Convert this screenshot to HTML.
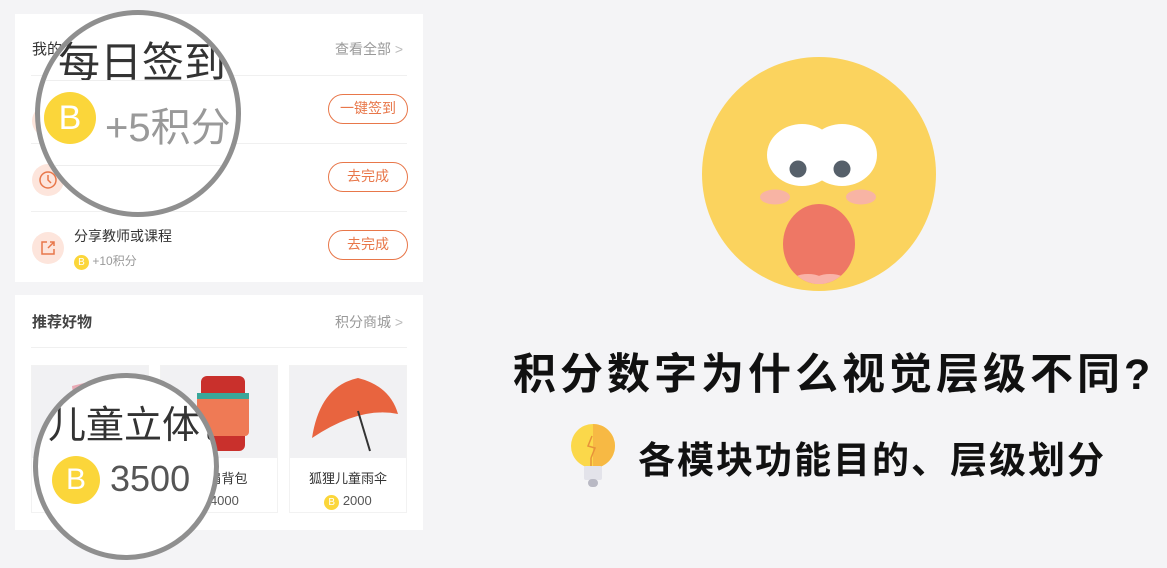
<!DOCTYPE html>
<html><head><meta charset="utf-8"><style>
*{margin:0;padding:0;box-sizing:border-box}
body{width:1167px;height:568px;background:#f4f4f6;position:relative;overflow:hidden;font-family:"Liberation Sans","Noto Sans CJK SC",sans-serif}
.a{position:absolute}
.card{position:absolute;background:#fff;left:15px;width:408px}
.t{color:#333;font-size:15px}
.g{color:#999;font-size:14px}
.btn{position:absolute;left:313px;width:80px;height:30px;border:1.5px solid #e8774a;border-radius:15px;color:#e8774a;font-size:14px;text-align:center;line-height:27px}
.line{position:absolute;left:16px;right:16px;height:1px;background:#f0f0f0}
.ic{position:absolute;left:17px;width:32px;height:32px;border-radius:50%;background:#fde5dc}
.coin{display:inline-block;border-radius:50%;background:#fbd63a;color:#fff;text-align:center}
.prod{position:absolute;top:70px;width:118px;height:148px;border:1px solid #f2f2f2;background:#fff}
.prod .img{height:92px;background:#f1f1f3}
.mag{position:absolute;border-radius:50%;border:5px solid #8f8f8f;background:#fff;overflow:hidden}
h1{position:absolute;left:513px;top:340px;font-size:43px;font-weight:bold;letter-spacing:4px;color:#111;white-space:nowrap}
h2{position:absolute;left:638px;top:430px;font-size:37px;font-weight:bold;letter-spacing:2px;color:#111;white-space:nowrap}
</style></head><body>
<div class="card" style="top:14px;height:268px">
  <div class="a t" style="left:17px;top:24px">我的</div>
  <div class="a g" style="left:320px;top:25px">查看全部 <span style="color:#bbb">&gt;</span></div>
  <div class="line" style="top:61px"></div>
  <div class="ic" style="top:91px"></div>
  <div class="btn" style="top:80px">一键签到</div>
  <div class="line" style="top:129px"></div>
  <div class="ic" style="top:150px"><svg width="32" height="32"><circle cx="16" cy="16" r="8" fill="none" stroke="#e8774a" stroke-width="1.5"/><path d="M16 11v5l3 3" fill="none" stroke="#e8774a" stroke-width="1.5"/></svg></div>
  <div class="btn" style="top:148px">去完成</div>
  <div class="line" style="top:197px"></div>
  <div class="ic" style="top:218px"><svg width="32" height="32"><path d="M15 10h-5v12h12v-5M18 10h4v4M22 10l-6 6" fill="none" stroke="#e8774a" stroke-width="1.5"/></svg></div>
  <div class="a t" style="left:59px;top:212px;font-size:14px">分享教师或课程</div>
  <div class="a g" style="left:59px;top:238px;font-size:12px"><span class="coin" style="width:15px;height:15px;font-size:10px;line-height:15px">B</span> +10积分</div>
  <div class="btn" style="top:216px">去完成</div>
</div>
<div class="card" style="top:295px;height:235px">
  <div class="a t" style="left:17px;top:16px;font-weight:bold;color:#444">推荐好物</div>
  <div class="a g" style="left:320px;top:17px">积分商城 <span style="color:#bbb">&gt;</span></div>
  <div class="line" style="top:52px"></div>
  <div class="prod" style="left:16px"><div class="img"><svg width="118" height="92"><path d="M40 20 L80 10 L85 50 L45 60 Z" fill="#e9a9b4"/></svg></div></div>
  <div class="prod" style="left:145px"><div class="img"><svg width="118" height="92"><rect x="40" y="10" width="44" height="75" rx="6" fill="#c9302c"/><rect x="36" y="30" width="52" height="40" rx="4" fill="#ef7a55"/><rect x="36" y="27" width="52" height="6" fill="#3aa79a"/></svg></div><div style="text-align:center;font-size:13px;color:#333;margin-top:10px">&nbsp;&nbsp;&nbsp;&nbsp;&nbsp;肩背包</div><div style="text-align:center;font-size:13px;color:#555;margin-top:6px">&nbsp;&nbsp;&nbsp;4000</div></div>
  <div class="prod" style="left:274px"><div class="img"><svg width="118" height="92"><path d="M22 72 Q30 20 68 12 Q100 20 108 48 Q70 40 22 72 Z" fill="#e8643f"/><path d="M68 45 L80 85" stroke="#333" stroke-width="2"/></svg></div><div style="text-align:center;font-size:13px;color:#333;margin-top:10px">狐狸儿童雨伞</div><div style="text-align:center;font-size:13px;color:#555;margin-top:6px"><span class="coin" style="width:15px;height:15px;font-size:10px;line-height:15px">B</span> 2000</div></div>
</div>
<div class="mag" style="left:35px;top:10px;width:206px;height:207px">
  <div class="a" style="left:18px;top:14px;font-size:42px;color:#333;white-space:nowrap">每日签到</div>
  <div class="a" style="left:5px;top:65px;height:1px;width:200px;background:#eee"></div>
  <div class="a coin" style="left:4px;top:77px;width:52px;height:52px;font-size:34px;line-height:52px">B</div>
  <div class="a" style="left:65px;top:80px;font-size:40px;color:#999;white-space:nowrap">+5积分</div>
  <div class="a" style="left:5px;top:150px;height:1px;width:200px;background:#eee"></div>
</div>
<div class="mag" style="left:33px;top:373px;width:186px;height:187px">
  <div class="a" style="left:10px;top:16px;font-size:38px;color:#333;white-space:nowrap">儿童立体包</div>
  <div class="a coin" style="left:14px;top:78px;width:48px;height:48px;font-size:30px;line-height:48px">B</div>
  <div class="a" style="left:72px;top:80px;font-size:36px;color:#555">3500</div>
</div>
<svg class="a" style="left:700px;top:55px" width="240" height="240">
  <circle cx="119" cy="119" r="117" fill="#fbd35e"/>
  <ellipse cx="102" cy="100" rx="35" ry="31" fill="#fff"/>
  <ellipse cx="142" cy="100" rx="35" ry="31" fill="#fff"/>
  <circle cx="98" cy="114" r="8.5" fill="#56606a"/>
  <circle cx="142" cy="114" r="8.5" fill="#56606a"/>
  <ellipse cx="75" cy="142" rx="15" ry="7.5" fill="#f8b4a4"/>
  <ellipse cx="161" cy="142" rx="15" ry="7.5" fill="#f8b4a4"/>
  <clipPath id="m"><ellipse cx="119" cy="189" rx="36" ry="40"/></clipPath>
  <ellipse cx="119" cy="189" rx="36" ry="40" fill="#ee7765"/>
  <g clip-path="url(#m)"><ellipse cx="108" cy="228" rx="18" ry="9" fill="#f9b3a8"/><ellipse cx="130" cy="228" rx="18" ry="9" fill="#f9b3a8"/></g>
</svg>
<h1>积分数字为什么视觉层级不同?</h1>
<svg class="a" style="left:568px;top:422px" width="52" height="70">
  <circle cx="25" cy="24" r="22" fill="#fbd84a"/>
  <path d="M25 2 A22 22 0 0 1 25 46 Z" fill="#f7b944"/>
  <rect x="16" y="44" width="18" height="14" rx="2" fill="#e3e3ea"/>
  <rect x="20" y="57" width="10" height="8" rx="4" fill="#b9b9c4"/>
  <path d="M24 14 L20 24 L27 26 L23 36 M23 36 L23 44" fill="none" stroke="#e8923a" stroke-width="1.5"/>
</svg>
<h2>各模块功能目的、层级划分</h2>
</body></html>
